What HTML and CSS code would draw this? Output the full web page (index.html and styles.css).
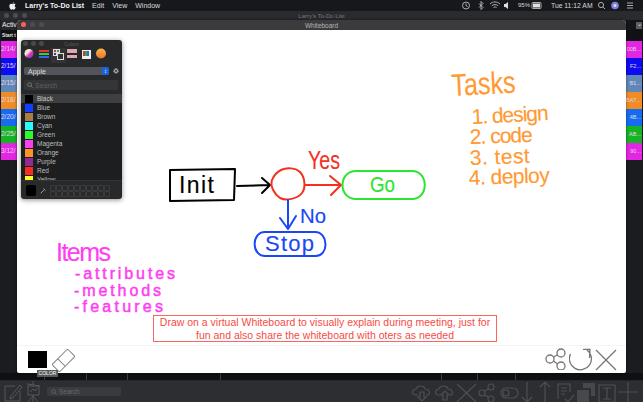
FILE: index.html
```html
<!DOCTYPE html>
<html lang="en">
<head>
    <meta charset="UTF-8">
    <meta name="viewport" content="width=device-width, initial-scale=1.0">
    <title>Larry's To-Do List</title>
    <link rel="stylesheet" href="styles.css">
</head>
<body>
    <!-- mac menu bar -->
    <header class="menubar">
        <svg class="apple" viewBox="0 0 10 12"><path d="M7 0.3C6 .4 5 1.3 5.1 2.6 6.2 2.6 7.1 1.5 7 .3ZM5.1 3.2C4.5 3.2 3.9 2.8 3.1 2.8 1.6 2.8.3 4 .3 6.2c0 2.4 1.7 5.3 3 5.3.7 0 1.1-.5 1.9-.5s1.100.5 1.900.5c1 0 2.200-1.800 2.700-3.300-1.900-.8-2.100-3.700-.1-4.700C9 2.900 7.900 2.800 7.300 2.800c-1 0-1.600.4-2.200.4Z"/></svg>
        <span class="menu-app">Larry's To-Do List</span>
        <span class="menu-item">Edit</span>
        <span class="menu-item">View</span>
        <span class="menu-item">Window</span>
        <svg class="status-icons" viewBox="460 0 183 11">
            <g class="status-line">
                <circle cx="466" cy="5.500" r="3.500"/><path d="M466 3.500V5.700L467.500 6.500"/>
                <path d="M479 3.500L483 7.500 481 9.500V1.500L483 3.500 479 7.500"/>
                <path d="M490 4C493 1.200 497 1.200 500 4M491.800 5.800C493.500 4.200 496.500 4.200 498.200 5.800M493.500 7.500C494.300 6.800 495.700 6.800 496.500 7.500"/>
                <circle cx="601" cy="5" r="2.600"/><path d="M603 7L605 9"/>
                <path d="M627 3H633M627 5.500H633M627 8H633"/>
            </g>
            <path class="status-fill" d="M504 4H505.500L508 2V9L505.500 7H504Z"/>
            <rect class="status-line" x="532" y="2.500" width="9" height="6" rx="1"/>
            <rect class="status-fill" x="533" y="3.500" width="7" height="4"/>
            <circle class="siri" cx="615" cy="5.500" r="3.800"/>
            <circle class="status-fill" cx="615" cy="5.500" r="1.500"/>
        </svg>
        <span class="menu-pct">95%</span>
        <span class="menu-clock">Tue 11:12 AM</span>
    </header>

    <!-- main window behind the whiteboard -->
    <main class="app">
        <div class="app-title">
            <div class="lights"><i></i><i></i><i></i></div>
            <span>Larry's To-Do List</span>
        </div>
        <div class="app-body">
            <div class="side side-left">
                <div class="side-head">Activ</div>
                <div class="side-start">Start t</div>
                <div class="row c-magenta">2/14/</div>
                <div class="row c-blue">2/15/</div>
                <div class="row c-steel">2/15/</div>
                <div class="row c-orange">2/18/</div>
                <div class="row c-azure">2/20/</div>
                <div class="row c-green">2/25/</div>
                <div class="row c-magenta">3/12/</div>
            </div>
            <div class="side side-right">
                <div class="side-head"><span class="chevron">&#8964;</span></div>
                <div class="side-start"></div>
                <div class="row c-magenta">00B...</div>
                <div class="row c-blue">F2...</div>
                <div class="row c-steel">B1...</div>
                <div class="row c-orange">BA7...</div>
                <div class="row c-azure">4B...</div>
                <div class="row c-green">AB...</div>
                <div class="row c-magenta">90...</div>
            </div>
        </div>
        <div class="ticks"><i></i><i></i><i></i><i></i><i></i><i></i><i></i></div>
        <footer class="toolbar">
            <svg class="tool-left" viewBox="0 380 44 22">
                <path d="M5 385H15M5 385V400H20V390M11 395L10 398 13 397 22 386 20 384Z"/>
                <path d="M27 383L40 385M33 380V384M28 385H39V394H28ZM33 394V401M33 395L28 401M33 395L38 401M30 391L33 388 35 390 37 387"/>
            </svg>
            <div class="tool-search"><svg viewBox="0 0 8 8"><circle cx="3.500" cy="3.500" r="2.500"/><path d="M5.500 5.500L7.500 7.500"/></svg>Search</div>
            <svg class="tool-right" viewBox="410 380 233 22">
                <path d="M418 394H416C411 394 412 388 416 388 417 384 424 384 425 388 430 388 431 394 427 394H426M420 391H424V396H426L422 400 418 396H420Z"/>
                <path d="M441 394H439C434 394 435 388 439 388 440 384 447 384 448 388 453 388 454 394 450 394H449M443 399H447V394H449L445 390 441 394H443Z"/>
                <path d="M457 383L476 401M476 383L457 401"/>
                <circle cx="482" cy="392" r="3"/><circle cx="491" cy="386" r="3"/><circle cx="491" cy="398" r="3"/><path d="M485 390L488 388M485 394L488 396"/>
                <rect x="501" y="387" width="17" height="10" rx="5"/><circle cx="506" cy="392" r="3"/>
                <path d="M527 381V401M522 396L527 401 532 396"/>
                <path d="M545 381V401M540 386L545 381 550 386"/>
                <path d="M558 398V383H570V391M561 387H567M561 390H567M561 393H565M565 398L568 401 574 394"/>
                <path class="tool-solid" d="M577 389H589V401H577ZM583 382H595V395H591V387H583Z"/>
                <path d="M599 384H615V401H599ZM603 387H611M603 398H611M607 387V398"/>
                <path d="M628 381V401M618 391H638"/>
            </svg>
        </footer>
    </main>

    <!-- whiteboard window -->
    <section class="board">
        <div class="board-title">
            <div class="lights lights-board"><i class="red"></i><i></i><i></i></div>
            <span>Whiteboard</span>
        </div>
        <svg class="canvas" viewBox="17 30 609 315">
            <!-- flow chart -->
            <g class="ink">
                <path class="ink-black" d="M170 170L235 169 234 200 170 201ZM237 186L270 185M262 178L270 185 262 193"/>
                <path class="ink-red" d="M281 170C287 167 296 168 300 172 305 177 306 188 302 193 297 199 286 201 280 198 274 194 270 186 272 180 274 175 277 172 281 170ZM305 185L340 185M330 176L341 185 331 195"/>
                <path class="ink-green" d="M356 171H412C429 171 429 199 412 199H356C338 199 338 171 356 171Z"/>
                <path class="ink-blue" d="M288 200V229M280 218L288 229 296 216M265 232H315C329 232 329 257 315 256H266C251 257 251 232 265 232Z"/>
            </g>
            <text class="hand hand-black" x="179" y="193" font-size="23" textLength="35" lengthAdjust="spacing">Init</text>
            <text class="hand hand-red" x="308" y="169" font-size="25" textLength="32" lengthAdjust="spacingAndGlyphs">Yes</text>
            <text class="hand hand-green" x="370" y="192" font-size="22" textLength="25" lengthAdjust="spacingAndGlyphs">Go</text>
            <text class="hand hand-blue" x="300" y="223" font-size="21" textLength="26" lengthAdjust="spacingAndGlyphs">No</text>
            <text class="hand hand-blue" x="265" y="251" font-size="22" textLength="49" lengthAdjust="spacing">Stop</text>
            <!-- tasks -->
            <text class="hand hand-orange" x="452" y="96" font-size="31" textLength="64" lengthAdjust="spacingAndGlyphs" transform="rotate(-3 452 96)">Tasks</text>
            <text class="hand hand-orange" x="472" y="124" font-size="21" textLength="77" lengthAdjust="spacing" transform="rotate(-3 472 124)">1. design</text>
            <text class="hand hand-orange" x="470" y="144" font-size="21" textLength="63" lengthAdjust="spacing" transform="rotate(-2 470 144)">2. code</text>
            <text class="hand hand-orange" x="470" y="165" font-size="21" textLength="60" lengthAdjust="spacing" transform="rotate(-2 470 165)">3. test</text>
            <text class="hand hand-orange" x="469" y="185" font-size="21" textLength="81" lengthAdjust="spacing" transform="rotate(-2 469 185)">4. deploy</text>
            <!-- items -->
            <text class="hand hand-magenta" x="56" y="261" font-size="25" textLength="55" lengthAdjust="spacing">Items</text>
            <text class="hand hand-magenta hand-small" x="75" y="279" font-size="16" textLength="100" lengthAdjust="spacing">-attributes</text>
            <text class="hand hand-magenta hand-small" x="74" y="295.500" font-size="16" textLength="87" lengthAdjust="spacing">-methods</text>
            <text class="hand hand-magenta hand-small" x="74" y="312" font-size="16" textLength="89" lengthAdjust="spacing">-features</text>
        </svg>
        <div class="note">Draw on a virtual Whiteboard to visually explain during meeting, just for<br>fun and also share the whiteboard with oters as needed</div>
        <div class="board-tools">
            <div class="swatch-wrap">
                <div class="swatch"></div>
                <div class="tooltip">COLOR</div>
            </div>
            <svg class="eraser" viewBox="0 0 24 24">
                <g transform="rotate(45 12 12)"><rect x="6.500" y="0.500" width="11" height="23" rx="1.500"/><path d="M6.500 15H17.500"/></g>
            </svg>
            <svg class="act act-share" viewBox="0 0 22 22">
                <circle cx="6" cy="11" r="4"/><circle cx="17" cy="5" r="4"/><circle cx="17" cy="18" r="4"/><path d="M9.500 9L13.500 7M9.500 13L13.500 16"/>
            </svg>
            <svg class="act act-undo" viewBox="0 0 24 24">
                <path d="M1.500 6A11 11 0 1 0 18 2M14 1.300H21L20.500 10"/>
            </svg>
            <svg class="act act-close" viewBox="0 0 22 22">
                <path d="M1 1L21 21M21 1L1 21"/>
            </svg>
        </div>
    </section>

    <!-- colour picker panel -->
    <aside class="colors">
        <div class="colors-title">
            <div class="lights lights-small"><i></i><i></i><i></i></div>
            <span>Colors</span>
        </div>
        <svg class="colors-tabs" viewBox="0 0 101 16">
            <rect class="tab-active" x="30" y="1" width="15" height="15"/>
            <circle cx="8" cy="6.500" r="4.500" fill="url(#wheel)"/>
            <defs>
                <linearGradient id="wheel" x1="0" y1="0" x2="1" y2="1"><stop offset="0" stop-color="#f4d13c"/><stop offset=".35" stop-color="#f0f0f0"/><stop offset=".6" stop-color="#e22fb0"/><stop offset="1" stop-color="#2f5de0"/></linearGradient>
                <linearGradient id="sun" x1="0" y1="0" x2="0" y2="1"><stop offset="0" stop-color="#f7b64a"/><stop offset="1" stop-color="#f0742a"/></linearGradient>
            </defs>
            <rect x="18" y="3" width="10" height="2" fill="#e33"/><rect x="18" y="6" width="10" height="2" fill="#3c4"/><rect x="18" y="9" width="10" height="2" fill="#36e"/>
            <rect x="32" y="2" width="7" height="7" fill="#ddd"/><rect x="33" y="3" width="2" height="2" fill="#d33"/><rect x="36" y="3" width="2" height="2" fill="#3a3"/><rect x="33" y="6" width="2" height="2" fill="#33d"/>
            <rect x="36" y="6" width="7" height="7" fill="#ddd"/><rect x="37" y="7" width="5" height="5" fill="#333"/>
            <rect x="46" y="2" width="10" height="9" fill="#d9a9b5"/><rect x="46" y="6" width="10" height="2" fill="#322"/>
            <rect x="61" y="3" width="9" height="9" fill="#eee"/><rect x="62" y="4" width="2" height="5" fill="#d33"/><rect x="64" y="4" width="2" height="5" fill="#3a4"/><rect x="66" y="4" width="2" height="5" fill="#36d"/>
            <circle cx="80" cy="6.500" r="5" fill="url(#sun)"/>
        </svg>
        <div class="colors-picker">
            <div class="select"><span>Apple</span><b class="stepper">&#8597;</b></div>
            <svg class="gear" viewBox="0 0 8 8"><circle cx="4" cy="4" r="2"/><circle class="gear-rim" cx="4" cy="4" r="3.200"/></svg>
        </div>
        <div class="colors-search"><svg viewBox="0 0 8 8"><circle cx="3.500" cy="3.500" r="2.500"/><path d="M5.500 5.500L7.500 7.500"/></svg>Search</div>
        <ul class="color-list">
            <li class="current"><i class="s-black"></i>Black</li>
            <li><i class="s-blue"></i>Blue</li>
            <li><i class="s-brown"></i>Brown</li>
            <li><i class="s-cyan"></i>Cyan</li>
            <li><i class="s-green"></i>Green</li>
            <li><i class="s-magenta"></i>Magenta</li>
            <li><i class="s-orange"></i>Orange</li>
            <li><i class="s-purple"></i>Purple</li>
            <li><i class="s-red"></i>Red</li>
            <li><i class="s-yellow"></i>Yellow</li>
        </ul>
        <div class="colors-foot">
            <div class="well"></div>
            <svg class="dropper" viewBox="0 0 10 10"><path d="M1 9L6 4M5 2L8 5"/></svg>
            <div class="cells">
                <i></i><i></i><i></i><i></i><i></i><i></i><i></i><i></i><i></i><i></i>
                <i></i><i></i><i></i><i></i><i></i><i></i><i></i><i></i><i></i><i></i>
            </div>
        </div>
    </aside>
</body>
</html>
```

FILE: styles.css
```css
html, body {
    margin: 0;
    height: 100%;
}
body {
    width: 643px;
    height: 402px;
    overflow: hidden;
    position: relative;
    display: flex;
    flex-direction: column;
    background-color: #1b1c20;
    font-family: "Liberation Sans", Arial, sans-serif;
    color: #e6e6e6;
}

/* menu bar */
.menubar {
    position: relative;
    height: 11px;
    flex: none;
    display: flex;
    align-items: center;
    background-color: #17181c;
    font-size: 7px;
    line-height: 11px;
    color: #d8d8d8;
}
.apple {
    width: 7px;
    height: 8px;
    margin-left: 9px;
    fill: #eee;
}
.menu-app {
    margin-left: 9px;
    font-weight: bold;
    color: #f2f2f2;
}
.menu-item {
    margin-left: 8px;
}
.status-icons {
    position: absolute;
    left: 460px;
    top: 0;
    width: 183px;
    height: 11px;
}
.status-line {
    fill: none;
    stroke: #cfcfcf;
    stroke-width: .8;
}
.status-fill {
    fill: #e0e0e0;
}
.siri {
    fill: #7a7fe0;
}
.menu-pct {
    position: absolute;
    left: 518px;
    font-size: 6px;
}
.menu-clock {
    position: absolute;
    left: 551px;
    font-size: 6.800px;
}

/* back window */
.app {
    flex: 1;
    display: flex;
    flex-direction: column;
    min-height: 0;
}
.app-title {
    position: relative;
    height: 9px;
    flex: none;
    background-color: #2a2b2f;
    display: flex;
    align-items: center;
    justify-content: center;
    font-size: 6px;
    color: #77787b;
}
.lights {
    position: absolute;
    left: 4px;
    top: 2px;
    display: flex;
    gap: 4px;
}
.lights i {
    width: 5px;
    height: 5px;
    border-radius: 50%;
    background-color: #4c4d50;
}
.lights .red {
    background-color: #ff5f57;
}
.app-body {
    flex: 1;
    min-height: 0;
    display: flex;
    justify-content: space-between;
    background-color: #1b1c20;
}
.side {
    width: 17px;
    white-space: nowrap;
    font-size: 6.500px;
}
.side-left {
    padding-left: 1px;
    width: 16px;
}
.side-head {
    height: 10px;
    line-height: 10px;
    background-color: #26272b;
    color: #eee;
    padding-left: 1px;
    font-size: 6.800px;
}
.side-start {
    height: 11px;
    line-height: 11px;
    font-size: 4.800px;
    font-weight: bold;
    background-color: #101114;
    padding-left: 1px;
}
.row {
    height: 17px;
    line-height: 16px;
    color: #e8d4e8;
}
.side-right .row {
    text-align: right;
    padding: 0 1px 0 0;
    width: 15px;
    font-size: 5.500px;
}
.side-right .side-head {
    background-color: #141518;
    display: flex;
    justify-content: flex-end;
    padding: 0;
}
.chevron {
    width: 6px;
    height: 7px;
    margin: 2px 1px 0 0;
    background-color: #5c5d60;
    font-size: 6px;
    line-height: 4px;
    text-align: center;
}
.c-magenta { background-color: #e326e3; }
.c-blue { background-color: #0c0cf0; }
.c-steel { background-color: #5f88b8; }
.c-orange { background-color: #f08c24; }
.c-azure { background-color: #166cf0; }
.c-green { background-color: #14b424; }
.ticks {
    height: 7px;
    flex: none;
    display: grid;
    grid-template-columns: 45px 42px 41px 93px 221px 36px 38px 1fr;
    background-color: #0f1013;
}
.ticks i {
    border-right: 1px solid #3b3c3f;
}
.toolbar {
    position: relative;
    height: 22px;
    flex: none;
    display: flex;
    align-items: center;
    background-color: #2d2e32;
    border-top: 1px solid #26272a;
    box-sizing: border-box;
}
.tool-left {
    width: 44px;
    height: 22px;
    fill: none;
    stroke: #56575a;
    stroke-width: 1;
}
.tool-search {
    margin-left: 3px;
    width: 74px;
    height: 9px;
    box-sizing: border-box;
    padding-left: 4px;
    display: flex;
    align-items: center;
    gap: 2px;
    background-color: #3a3b3f;
    border-radius: 2px;
    font-size: 6.500px;
    color: #696a6d;
}
.tool-search svg {
    width: 6px;
    height: 6px;
    fill: none;
    stroke: #696a6d;
}
.tool-right {
    margin-left: auto;
    width: 233px;
    height: 22px;
    fill: none;
    stroke: #4e4f52;
    stroke-width: 1.200;
}
.tool-solid {
    fill: #47484b;
    stroke: none;
}

/* whiteboard window */
.board {
    position: absolute;
    left: 17px;
    top: 20px;
    width: 609px;
    height: 353px;
    display: flex;
    flex-direction: column;
    background-color: #fff;
    border-radius: 4px 4px 2px 2px;
    box-shadow: 0 0 3px rgba(0, 0, 0, 0.5);
}
.board-title {
    position: relative;
    height: 10px;
    flex: none;
    display: flex;
    align-items: center;
    justify-content: center;
    background-color: #3b3b3e;
    border-radius: 4px 4px 0 0;
    font-size: 6.500px;
    color: #b5b5b5;
}
.lights-board {
    left: 4px;
    top: 2px;
}
.canvas {
    display: block;
    width: 609px;
    height: 315px;
    flex: none;
}
.ink path {
    fill: none;
    stroke-width: 2;
    stroke-linecap: round;
    stroke-linejoin: round;
}
.ink-black { stroke: #000; }
.ink-red { stroke: #f4301f; }
.ink-green { stroke: #2be52e; }
.ink-blue { stroke: #1a48f5; }
.hand {
    font-family: "Liberation Sans", Arial, sans-serif;
    stroke-width: .15;
    stroke-linejoin: round;
}
.hand-small {
    stroke-width: .5;
}
.hand-black { fill: #000; stroke: #000; }
.hand-red { fill: #f4301f; stroke: #f4301f; }
.hand-green { fill: #2be52e; stroke: #2be52e; }
.hand-blue { fill: #1a48f5; stroke: #1a48f5; }
.hand-orange { fill: #ff9a33; stroke: #ff9a33; }
.hand-magenta { fill: #ff3df2; stroke: #ff3df2; }
.note {
    position: absolute;
    left: 136px;
    top: 295px;
    width: 344px;
    height: 27px;
    box-sizing: border-box;
    border: 1.500px solid #fb6660;
    background-color: #fff;
    font-size: 10.500px;
    line-height: 12.500px;
    text-align: center;
    color: #f84a45;
    white-space: nowrap;
}
.board-tools {
    flex: 1;
    display: flex;
    align-items: flex-start;
    padding: 4px 9px 0 11px;
    border-top: 1px solid #f5f5f5;
}
.swatch-wrap {
    position: relative;
}
.swatch {
    width: 19px;
    height: 17px;
    margin-top: 1px;
    background-color: #000;
}
.tooltip {
    position: absolute;
    left: 9px;
    top: 20px;
    width: 21px;
    height: 7px;
    background-color: #58595b;
    color: #fff;
    font-size: 5px;
    line-height: 7px;
    text-align: center;
    z-index: 1;
}
.eraser {
    width: 23px;
    height: 23px;
    margin: -1px 0 0 5px;
    fill: none;
    stroke: #808080;
    stroke-width: 1;
}
.act {
    fill: none;
    stroke: #767676;
    stroke-width: 1.300;
}
.act-share {
    width: 22px;
    height: 22px;
    margin: -2px 0 0 auto;
}
.act-undo {
    width: 24px;
    height: 24px;
    margin-left: 3px;
    margin-top: -2px;
}
.act-close {
    width: 22px;
    height: 22px;
    margin-left: 2px;
    margin-top: -1px;
}

/* colour panel */
.colors {
    position: absolute;
    left: 21px;
    top: 40px;
    width: 101px;
    height: 159px;
    display: flex;
    flex-direction: column;
    background-color: #28292b;
    border-radius: 3px;
    box-shadow: 0 1px 5px rgba(0, 0, 0, 0.45);
    overflow: hidden;
    font-size: 6.500px;
}
.colors-title {
    position: relative;
    height: 7px;
    flex: none;
    display: flex;
    align-items: center;
    justify-content: center;
    font-size: 5px;
    color: #5b5c5e;
}
.lights-small {
    left: 2px;
    top: 0;
    margin-top: 1px;
    gap: 3px;
}
.lights-small i {
    width: 5px;
    height: 5px;
    background-color: #48494b;
}
.colors-tabs {
    display: block;
    width: 101px;
    height: 16px;
    margin-top: 0;
    flex: none;
}
.tab-active {
    fill: #333436;
}
.colors-picker {
    display: flex;
    align-items: center;
    margin-top: 4px;
    padding-left: 3px;
    flex: none;
}
.select {
    width: 85px;
    height: 8px;
    display: flex;
    justify-content: space-between;
    align-items: center;
    box-sizing: border-box;
    padding-left: 4px;
    background-color: #54555a;
    border-radius: 2px;
    color: #dedede;
    font-size: 7px;
}
.stepper {
    width: 7px;
    height: 8px;
    background-color: #1c63d8;
    border-radius: 0 2px 2px 0;
    font-size: 6px;
    line-height: 8px;
    text-align: center;
    font-weight: normal;
    color: #fff;
}
.gear {
    width: 6px;
    height: 6px;
    margin-left: 4px;
    fill: none;
    stroke: #bdbdbd;
    stroke-width: 1.300;
}
.gear-rim {
    stroke-dasharray: 1 1;
}
.colors-search {
    margin: 5px 4px 0 3px;
    height: 10px;
    flex: none;
    box-sizing: border-box;
    padding-left: 3px;
    display: flex;
    align-items: center;
    gap: 2px;
    background-color: #343537;
    border-radius: 2px;
    font-size: 7px;
    color: #5d5e60;
}
.colors-search svg {
    width: 6px;
    height: 6px;
    fill: none;
    stroke: #88898b;
}
.color-list {
    list-style: none;
    margin: 4px 0 0;
    padding: 0;
    height: 86px;
    flex: none;
    overflow: hidden;
    background-color: #1d1e20;
}
.color-list li {
    height: 9px;
    display: flex;
    align-items: center;
    gap: 4px;
    padding-left: 4px;
    line-height: 9px;
    color: #bdbdbd;
}
.color-list .current {
    background-color: #3f3f41;
    color: #c8c8c8;
}
.color-list i {
    width: 8px;
    height: 8px;
}
.s-black { background-color: #000; }
.s-blue { background-color: #0f3fff; }
.s-brown { background-color: #a97c4b; }
.s-cyan { background-color: #2bfcff; }
.s-green { background-color: #2bfc2f; }
.s-magenta { background-color: #fb3df5; }
.s-orange { background-color: #fb922b; }
.s-purple { background-color: #912a92; }
.s-red { background-color: #fb2b20; }
.s-yellow { background-color: #fdf92f; }
.colors-foot {
    flex: 1;
    display: flex;
    align-items: flex-start;
    padding: 4px 0 0 5px;
    border-top: 1px solid #333436;
}
.well {
    width: 10px;
    height: 11px;
    background-color: #000;
    border-radius: 2px;
}
.dropper {
    width: 7px;
    height: 7px;
    margin: 2px 0 0 4px;
    fill: none;
    stroke: #a0a0a0;
    stroke-width: 1.400;
}
.cells {
    margin-left: 3px;
    display: grid;
    grid-template-columns: repeat(10, 6px);
    grid-auto-rows: 6px;
    gap: 0;
}
.cells i {
    box-sizing: border-box;
    border: 1px solid #3a3b3d;
    border-radius: 1px;
}
```
